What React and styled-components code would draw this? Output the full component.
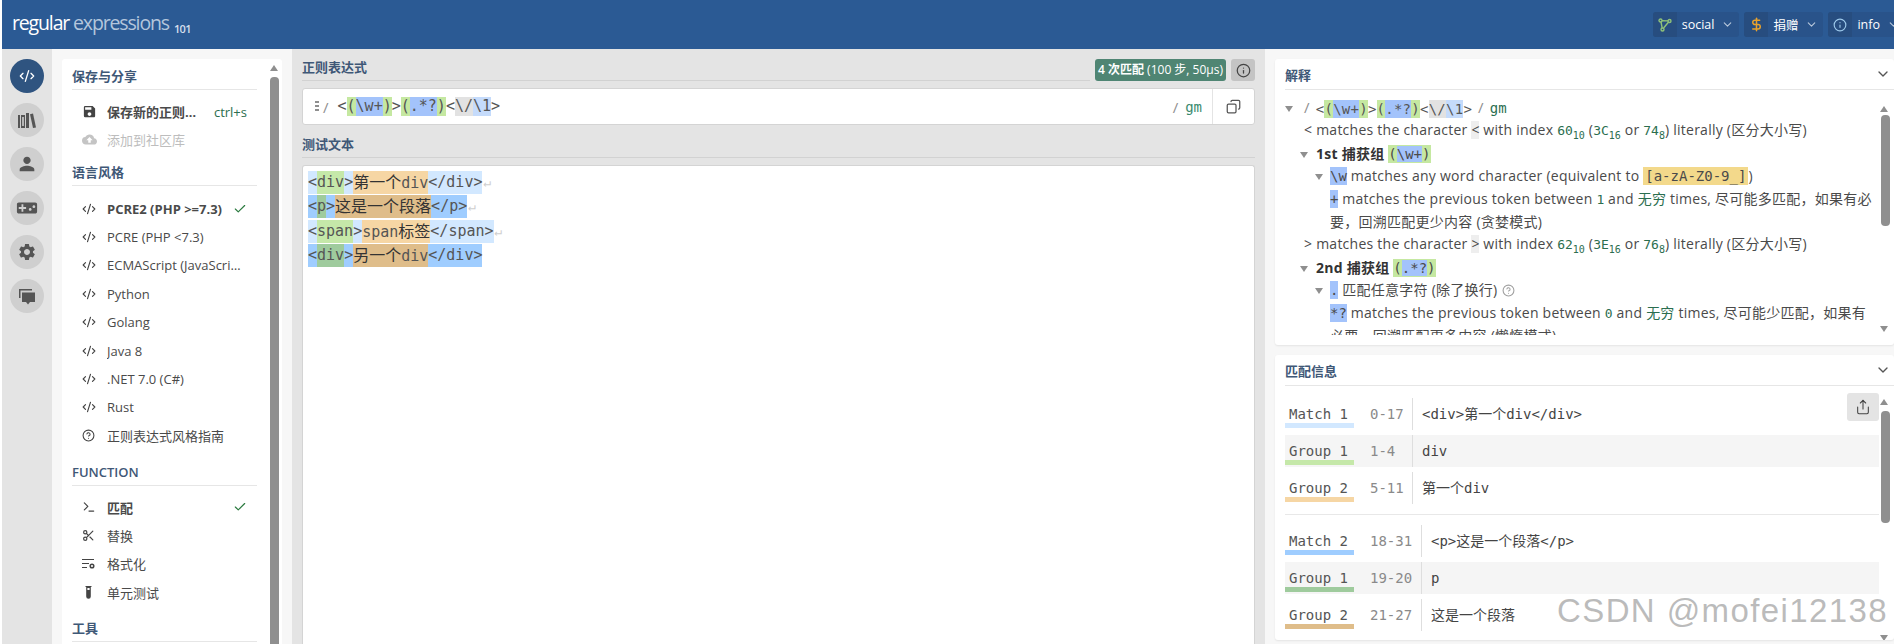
import styled, { createGlobalStyle } from 'styled-components'
import { Check, ChevronDown, CircleHelp, CodeXml, Copy, DollarSign, Info, Scissors, Share, Terminal } from 'lucide-react'
import { MdSave, MdCloudUpload, MdPerson, MdVideogameAsset, MdSettings } from 'react-icons/md'

const UI_FONT = `"Open Sans", "Noto Sans", "Noto Sans CJK SC", sans-serif`
const MONO_FONT = `"DejaVu Sans Mono", "Noto Sans CJK SC", monospace`

const GlobalStyle = createGlobalStyle`
  html, body {
    margin: 0;
    height: 100%;
    overflow: hidden;
    background: #ffffff;
  }
  #root {
    height: 100%;
  }
`

const Page = styled.div`
  height: 644px;
  padding-left: 2px;
  display: flex;
  flex-direction: column;
  font-family: ${UI_FONT};
  font-size: 13px;
  color: #4a4a4a;
  overflow: hidden;
  position: relative;
`

const Header = styled.header`
  flex: 0 0 49px;
  background: #2b5a94;
  display: flex;
  align-items: center;
  padding: 0 0 0 10px;
`

const Logo = styled.div`
  font-size: 19.5px;
  letter-spacing: -1.15px;
  color: #ffffff;
  white-space: nowrap;
  margin-top: -5px;
`

const LogoLight = styled.span`
  color: #b4c6dc;
`

const LogoSmall = styled.span`
  font-size: 11px;
  font-weight: 600;
  letter-spacing: -0.6px;
  color: #d5dfec;
  margin-left: 5px;
  vertical-align: -3px;
`

const HeaderButtons = styled.div`
  margin-left: auto;
  margin-right: -11px;
  display: flex;
  gap: 5px;
`

const HeaderButton = styled.div`
  height: 25px;
  display: flex;
  align-items: center;
  background: #29538a;
  border-radius: 3px;
  color: #ffffff;
  font-size: 12.5px;
  overflow: hidden;
`

const HeaderIcon = styled.span`
  width: 24px;
  height: 25px;
  background: #274d7f;
  display: flex;
  align-items: center;
  justify-content: center;
  color: ${p => p.$color};
`

const HeaderLabel = styled.span`
  margin: 0 5px;
`

const HeaderChevron = styled.span`
  display: flex;
  color: #b8c8dc;
  margin-right: 5px;
  margin-left: 2px;
`

const Body = styled.div`
  flex: 1;
  display: flex;
  min-height: 0;
`

const Rail = styled.nav`
  flex: 0 0 50px;
  background: #e4e4e4;
  padding-top: 10px;
  display: flex;
  flex-direction: column;
  align-items: center;
  gap: 10px;
`

const RailButton = styled.div`
  width: 34px;
  height: 34px;
  border-radius: 50%;
  display: flex;
  align-items: center;
  justify-content: center;
  background: ${p => (p.$active ? '#2f5480' : '#cfcfcf')};
  color: ${p => (p.$active ? '#ffffff' : '#555555')};
`

const SideWrap = styled.aside`
  flex: 0 0 240px;
  background: #f7f7f7;
  padding: 10px 10px 0;
  box-sizing: border-box;
`

const SideCard = styled.div`
  background: #ffffff;
  height: 100%;
  padding: 4px 25px 0 10px;
  position: relative;
  border-radius: 3px 3px 0 0;
  overflow: hidden;
`

const SideHeading = styled.div`
  height: 27px;
  line-height: 26px;
  box-sizing: border-box;
  border-bottom: 1px solid #e6e6e6;
  margin-top: ${p => p.$top || 0}px;
  font-weight: 600;
  font-size: 13px;
  color: #3f5877;
`

const SideList = styled.div`
  padding-top: ${p => p.$pad || 8}px;
`

const SideRow = styled.div`
  height: ${p => p.$height || 28.4}px;
  display: flex;
  align-items: center;
  white-space: nowrap;
  color: ${p => (p.$disabled ? '#bdbdbd' : '#4a4a4a')};
  font-weight: ${p => (p.$active ? 700 : 400)};
`

const SideIcon = styled.span`
  width: 35px;
  padding-left: 10px;
  box-sizing: border-box;
  flex: none;
  display: flex;
  color: ${p => (p.$disabled ? '#c4c4c4' : '#444444')};
`

const SideText = styled.span`
  flex: 1;
  overflow: hidden;
  text-overflow: ellipsis;
  ${p => p.$limit && `max-width: ${p.$limit}px;`}
`

const Shortcut = styled.span`
  color: #2b6e4f;
  font-weight: 400;
  margin-left: auto;
  margin-right: 10px;
`

const RowCheck = styled.span`
  display: flex;
  color: #2b7a3f;
  margin-right: 10px;
  flex: none;
`

const ScrollArrow = styled.span`
  position: absolute;
  right: ${p => p.$right}px;
  top: ${p => p.$top}px;
  width: 0;
  height: 0;
  border-left: 4px solid transparent;
  border-right: 4px solid transparent;
  ${p => (p.$down ? 'border-top: 6px solid #8f8f8f;' : 'border-bottom: 6px solid #8f8f8f;')}
`

const ScrollThumb = styled.span`
  position: absolute;
  right: ${p => p.$right}px;
  top: ${p => p.$top}px;
  width: 9px;
  height: ${p => p.$height}px;
  background: #8f8f8f;
  border-radius: 4px;
`

const Main = styled.main`
  flex: 0 0 973px;
  background: #e4e4e4;
  padding: 10px 10px 0;
  box-sizing: border-box;
  display: flex;
  flex-direction: column;
`

const MainHeadingRow = styled.div`
  display: flex;
  align-items: flex-start;
  gap: 8px;
  margin-top: ${p => p.$top || 0}px;
`

const MainHeading = styled.div`
  flex: 1;
  height: 21px;
  line-height: 16px;
  border-bottom: 1px solid #d2d2d2;
  font-weight: 600;
  color: #3f5877;
`

const MatchBadge = styled.div`
  width: 131px;
  height: 22px;
  border-radius: 3px;
  background: #4f8573;
  color: #ffffff;
  font-size: 12px;
  line-height: 22px;
  text-align: center;
  white-space: nowrap;
  margin-left: -3px;
  margin-right: -3px;
`

const BadgeStrong = styled.b`
  font-weight: 600;
`

const InfoButton = styled.div`
  width: 24px;
  height: 22px;
  border-radius: 3px;
  background: #c4c4c4;
  color: #444444;
  display: flex;
  align-items: center;
  justify-content: center;
`

const RegexBox = styled.div`
  height: 37px;
  margin-top: 7px;
  background: #ffffff;
  border: 1px solid #d4d4d4;
  border-radius: 3px;
  box-sizing: border-box;
  display: flex;
  align-items: center;
  padding-left: 12px;
`

const DragDots = styled.span`
  width: 4px;
  height: 11px;
  margin-right: 4px;
  background: repeating-linear-gradient(#8f8f8f 0 2px, transparent 2px 4px);
`

const Delim = styled.span`
  font-family: ${UI_FONT};
  font-size: 15px;
  color: #8f8f8f;
  margin-left: ${p => p.$before || 0}px;
  margin-right: ${p => p.$gap || 0}px;
`

const Mono = styled.span`
  font-family: ${MONO_FONT};
  font-size: ${p => p.$size || 15}px;
  line-height: ${p => p.$line || 19}px;
  color: #555555;
  display: inline-flex;
  white-space: pre;
  vertical-align: middle;
`

const Hl = styled.span`
  background: ${p => p.$bg};
`

const Flags = styled.span`
  font-family: ${MONO_FONT};
  color: #3a8a6e;
  font-size: 14px;
  margin-left: 7px;
`

const RegexEnd = styled.div`
  margin-left: auto;
  display: flex;
  align-items: center;
  height: 100%;
`

const CopyButton = styled.div`
  width: 41px;
  height: 100%;
  margin-left: 10px;
  border-left: 1px solid #e4e4e4;
  display: flex;
  align-items: center;
  justify-content: center;
  color: #555555;
`

const CopyIcon = styled(Copy)`
  transform: scaleX(-1);
`

const TestBox = styled.div`
  flex: 1;
  margin-top: 7px;
  background: #ffffff;
  border: 1px solid #d4d4d4;
  border-bottom: none;
  border-radius: 3px 3px 0 0;
  padding: 5px 5px 0;
`

const TestLine = styled.div`
  height: 24.3px;
  display: flex;
  align-items: flex-start;
  font-family: ${MONO_FONT};
  font-size: 15px;
  color: #555555;
  white-space: pre;
`

const TestHl = styled.span`
  height: 23px;
  line-height: 23px;
  background: ${p => p.$bg};
`

const Cjk = styled.span`
  font-size: 16px;
  color: #333333;
`

const NewLine = styled.span`
  height: 23px;
  line-height: 23px;
  font-size: 13px;
  color: #cfcfcf;
  margin-left: 1px;
`

const RightWrap = styled.section`
  flex: 1;
  min-width: 0;
  background: #f7f7f7;
  padding: 10px 0 0 10px;
  display: flex;
  flex-direction: column;
  gap: 10px;
`

const Card = styled.div`
  height: ${p => p.$height}px;
  background: #ffffff;
  border-radius: 3px;
  box-shadow: 0 1px 2px rgba(0, 0, 0, 0.08);
  padding: 0 0 0 10px;
  position: relative;
  overflow: hidden;
  box-sizing: border-box;
`

const CardHeader = styled.div`
  height: 31px;
  box-sizing: border-box;
  border-bottom: 1px solid #e6e6e6;
  display: flex;
  align-items: center;
  justify-content: space-between;
  padding-right: 3px;
  font-size: 13px;
  font-weight: 600;
  color: #3f5877;
`

const CardChevron = styled.span`
  display: flex;
  color: #555555;
`

const TreeBody = styled.div`
  height: 239px;
  width: 591px;
  margin-top: 6px;
  overflow: hidden;
  font-size: 14px;
  letter-spacing: 0.25px;
  color: #4a4a4a;
`

const TreeRow = styled.div`
  line-height: 22.4px;
  padding-left: ${p => p.$indent}px;
  font-weight: ${p => (p.$bold ? 700 : 400)};
  color: ${p => (p.$bold ? '#333333' : 'inherit')};
`

const Triangle = styled.span`
  display: inline-block;
  width: 0;
  height: 0;
  border-left: 4px solid transparent;
  border-right: 4px solid transparent;
  border-top: 6px solid #8f8f8f;
  margin-right: ${p => p.$gap}px;
  vertical-align: 1px;
`

const Chip = styled.span`
  background: ${p => p.$bg};
  font-family: ${p => (p.$mono ? MONO_FONT : 'inherit')};
  font-weight: 400;
  letter-spacing: 0;
  padding: 0 ${p => p.$pad || 0}px;
  display: inline-block;
  line-height: 18px;
  vertical-align: top;
  margin-top: 2px;
  color: #4a4a4a;
`

const Num = styled.span`
  color: #2b6e4f;
  font-family: ${MONO_FONT};
  letter-spacing: 0;
  font-size: ${p => p.$size || 13}px;
`

const Sub = styled.sub`
  font-size: 10px;
  line-height: 0;
`

const Infinite = styled.span`
  color: #2b6e4f;
`

const HelpIcon = styled.span`
  display: inline-flex;
  color: #a0a0a0;
  margin-left: 5px;
  vertical-align: -2px;
`

const MatchBody = styled.div`
  padding-top: 12px;
  padding-right: 15px;
`

const MatchGroup = styled.div`
  display: flex;
  flex-direction: column;
  gap: 5px;
  padding-bottom: ${p => (p.$last ? 0 : 10)}px;
  margin-bottom: ${p => (p.$last ? 0 : 10)}px;
  border-bottom: ${p => (p.$last ? 'none' : '1px solid #e8e8e8')};
`

const MatchRow = styled.div`
  height: 32px;
  display: flex;
  background: ${p => (p.$shade ? '#f5f5f5' : 'transparent')};
  font-family: ${MONO_FONT};
  font-size: 14px;
`

const MatchLabel = styled.div`
  width: 69px;
  height: 30px;
  box-sizing: border-box;
  padding: 7px 0 0 4px;
  line-height: 18px;
  border-bottom: 5px solid ${p => p.$color};
  color: #555555;
  white-space: pre;
`

const MatchRange = styled.div`
  width: ${p => p.$width}px;
  margin-left: 16px;
  line-height: 32px;
  color: #8a8a8a;
`

const MatchValue = styled.div`
  border-left: 1px solid #dedede;
  padding-left: 9px;
  line-height: 32px;
  color: #444444;
`

const ShareButton = styled.div`
  position: absolute;
  right: 15px;
  top: 38px;
  width: 32px;
  height: 28px;
  background: #e4e4e4;
  border-radius: 3px;
  display: flex;
  align-items: center;
  justify-content: center;
  color: #444444;
`

const Watermark = styled.div`
  position: absolute;
  left: 1557px;
  top: 592px;
  font-family: "Liberation Sans", sans-serif;
  font-size: 33px;
  letter-spacing: 1.4px;
  line-height: 38px;
  color: rgba(165, 165, 165, 0.75);
  text-shadow: 0 0 2px #ffffff, 1px 1px 2px rgba(255, 255, 255, 0.9);
  white-space: nowrap;
  pointer-events: none;
`

function BooksIcon() {
  return (
    <svg width="18" height="17" viewBox="0 0 18 17" fill="currentColor">
      <rect x="0" y="3" width="2" height="13" />
      <path d="M3 3h4v13H3z M4.2 5v9h1.6V5z" fillRule="evenodd" />
      <rect x="8" y="1" width="3" height="15" />
      <path d="M12 2.2l3-.8 3 14-3 .6z" />
    </svg>
  )
}

function ChatIcon() {
  return (
    <svg width="18" height="17" viewBox="0 0 18 17" fill="currentColor">
      <path d="M1 1h13v1.5H2.5V10H1z" />
      <path d="M4 4.5h13V14h-5l-2 2.5L8 14H4z" />
    </svg>
  )
}

function SocialIcon() {
  return (
    <svg width="14" height="14" viewBox="0 0 14 14" fill="none" stroke="#8fc27a" strokeWidth="1.4">
      <circle cx="2.5" cy="2.5" r="1.5" />
      <circle cx="11.5" cy="3" r="1.5" />
      <circle cx="4.5" cy="11.5" r="1.5" />
      <path d="M4 2.7l6 .2M3 4l1.2 6M10.4 4.2L5.6 10" />
    </svg>
  )
}

function FormatIcon() {
  return (
    <svg width="13" height="13" viewBox="0 0 13 13" fill="none" stroke="currentColor" strokeWidth="1.1">
      <path d="M0 2.5h12M0 6.5h7M0 10.5h5" />
      <circle cx="10" cy="9" r="1.8" strokeWidth="1.5" />
    </svg>
  )
}

function TubeIcon() {
  return (
    <svg width="13" height="13" viewBox="0 0 13 13" fill="currentColor">
      <path d="M3.5 0h6v1h-.7v9.5a2.3 2.3 0 0 1-4.6 0V1h-.7z M5.4 2v2h2.2V2z" fillRule="evenodd" />
    </svg>
  )
}

const flavors = ['PCRE (PHP <7.3)', 'ECMAScript (JavaScript)', 'Python', 'Golang', 'Java 8', '.NET 7.0 (C#)', 'Rust']

function RegexTokens({ size, line }) {
  return (
    <Mono $size={size} $line={line}>
      {'<'}
      <Hl $bg="#c5e8a1">(</Hl>
      <Hl $bg="#a3c3fb">\w+</Hl>
      <Hl $bg="#c5e8a1">)</Hl>
      {'>'}
      <Hl $bg="#c5e8a1">(</Hl>
      <Hl $bg="#a3c3fb">.*?</Hl>
      <Hl $bg="#c5e8a1">)</Hl>
      {'<'}
      <Hl $bg="#e2e2e2">\/</Hl>
      <Hl $bg="#c5dbfb">\1</Hl>
      {'>'}
    </Mono>
  )
}

function TestRow({ open, name, text, close, alt, marker = true }) {
  const full = alt ? '#9fcdff' : '#d2e8ff'
  const group1 = alt ? '#9fcb9d' : '#c5e8a9'
  const group2 = alt ? '#dfbd8a' : '#f6d6a4'
  return (
    <TestLine>
      <TestHl $bg={full}>{open}</TestHl>
      <TestHl $bg={group1}>{name}</TestHl>
      <TestHl $bg={full}>{'>'}</TestHl>
      <TestHl $bg={group2}>{text}</TestHl>
      <TestHl $bg={full}>{close}</TestHl>
      {marker && <NewLine>↵</NewLine>}
    </TestLine>
  )
}

function MatchTable({ rows, rangeWidth, last }) {
  return (
    <MatchGroup $last={last}>
      {rows.map((row, i) => (
        <MatchRow key={row.label} $shade={i === 1}>
          <MatchLabel $color={row.color}>{row.label}</MatchLabel>
          <MatchRange $width={rangeWidth}>{row.range}</MatchRange>
          <MatchValue>{row.value}</MatchValue>
        </MatchRow>
      ))}
    </MatchGroup>
  )
}

export default function App() {
  return (
    <Page>
      <GlobalStyle />
      <Header>
        <Logo>
          regular <LogoLight>expressions</LogoLight>
          <LogoSmall>101</LogoSmall>
        </Logo>
        <HeaderButtons>
          <HeaderButton>
            <HeaderIcon><SocialIcon /></HeaderIcon>
            <HeaderLabel>social</HeaderLabel>
            <HeaderChevron><ChevronDown size={13} /></HeaderChevron>
          </HeaderButton>
          <HeaderButton>
            <HeaderIcon $color="#e9a22c"><DollarSign size={15} strokeWidth={2.4} /></HeaderIcon>
            <HeaderLabel>捐赠</HeaderLabel>
            <HeaderChevron><ChevronDown size={13} /></HeaderChevron>
          </HeaderButton>
          <HeaderButton>
            <HeaderIcon $color="#9cc8ea"><Info size={14} /></HeaderIcon>
            <HeaderLabel>info</HeaderLabel>
            <HeaderChevron><ChevronDown size={13} /></HeaderChevron>
          </HeaderButton>
        </HeaderButtons>
      </Header>
      <Body>
        <Rail>
          <RailButton $active><CodeXml size={16} /></RailButton>
          <RailButton><BooksIcon /></RailButton>
          <RailButton><MdPerson size={22} /></RailButton>
          <RailButton><MdVideogameAsset size={22} /></RailButton>
          <RailButton><MdSettings size={20} /></RailButton>
          <RailButton><ChatIcon /></RailButton>
        </Rail>
        <SideWrap>
          <SideCard>
            <SideHeading>保存与分享</SideHeading>
            <SideList>
              <SideRow $active $height={27}>
                <SideIcon><MdSave size={15} /></SideIcon>
                <SideText $limit={92}>保存新的正则表达式</SideText>
                <Shortcut>ctrl+s</Shortcut>
              </SideRow>
              <SideRow $disabled>
                <SideIcon $disabled><MdCloudUpload size={15} /></SideIcon>
                <SideText>添加到社区库</SideText>
              </SideRow>
            </SideList>
            <SideHeading $top={6}>语言风格</SideHeading>
            <SideList>
              <SideRow $active>
                <SideIcon><CodeXml size={14} /></SideIcon>
                <SideText>PCRE2 (PHP &gt;=7.3)</SideText>
                <RowCheck><Check size={14} /></RowCheck>
              </SideRow>
              {flavors.map(name => (
                <SideRow key={name}>
                  <SideIcon><CodeXml size={14} /></SideIcon>
                  <SideText $limit={135}>{name}</SideText>
                </SideRow>
              ))}
              <SideRow>
                <SideIcon><CircleHelp size={13} /></SideIcon>
                <SideText>正则表达式风格指南</SideText>
              </SideRow>
            </SideList>
            <SideHeading $top={9}>FUNCTION</SideHeading>
            <SideList $pad={7}>
              <SideRow $active>
                <SideIcon><Terminal size={14} /></SideIcon>
                <SideText>匹配</SideText>
                <RowCheck><Check size={14} /></RowCheck>
              </SideRow>
              <SideRow>
                <SideIcon><Scissors size={13} strokeWidth={2.2} /></SideIcon>
                <SideText>替换</SideText>
              </SideRow>
              <SideRow>
                <SideIcon><FormatIcon /></SideIcon>
                <SideText>格式化</SideText>
              </SideRow>
              <SideRow>
                <SideIcon><TubeIcon /></SideIcon>
                <SideText>单元测试</SideText>
              </SideRow>
            </SideList>
            <SideHeading $top={9}>工具</SideHeading>
            <ScrollArrow $right={4} $top={6} />
            <ScrollThumb $right={3} $top={18} $height={600} />
          </SideCard>
        </SideWrap>
        <Main>
          <MainHeadingRow>
            <MainHeading>正则表达式</MainHeading>
            <MatchBadge><BadgeStrong>4 次匹配</BadgeStrong> (100 步, 50µs)</MatchBadge>
            <InfoButton><Info size={15} /></InfoButton>
          </MainHeadingRow>
          <RegexBox>
            <DragDots />
            <Delim $gap={9}>/</Delim>
            <RegexTokens />
            <RegexEnd>
              <Delim>/</Delim>
              <Flags>gm</Flags>
              <CopyButton><CopyIcon size={15} /></CopyButton>
            </RegexEnd>
          </RegexBox>
          <MainHeadingRow $top={11}>
            <MainHeading>测试文本</MainHeading>
          </MainHeadingRow>
          <TestBox>
            <TestRow open="<" name="div" text={<><Cjk>第一个</Cjk>div</>} close="</div>" />
            <TestRow alt open="<" name="p" text={<Cjk>这是一个段落</Cjk>} close="</p>" />
            <TestRow open="<" name="span" text={<>span<Cjk>标签</Cjk></>} close="</span>" />
            <TestRow alt open="<" name="div" text={<><Cjk>另一个</Cjk>div</>} close="</div>" marker={false} />
          </TestBox>
        </Main>
        <RightWrap>
          <Card $height={286}>
            <CardHeader>解释<CardChevron><ChevronDown size={16} /></CardChevron></CardHeader>
            <TreeBody>
              <TreeRow $indent={0}>
                <Triangle $gap={11} />
                <Delim $gap={6}>/</Delim>
                <RegexTokens size={14} line={18} />
                <Delim $before={6} $gap={6}>/</Delim>
                <Num $size={14}>gm</Num>
              </TreeRow>
              <TreeRow $indent={19}>
                &lt; matches the character <Chip $bg="#eeeeee">&lt;</Chip> with index <Num>60<Sub>10</Sub></Num> (<Num>3C<Sub>16</Sub></Num> or <Num>74<Sub>8</Sub></Num>) literally (区分大小写)
              </TreeRow>
              <TreeRow $indent={15} $bold>
                <Triangle $gap={8} />1st 捕获组 <Chip $bg="#c5e8a1" $mono>(<Hl $bg="#a3c3fb">\w+</Hl>)</Chip>
              </TreeRow>
              <TreeRow $indent={30}>
                <Triangle $gap={7} /><Chip $bg="#a3c3fb" $mono>\w</Chip> matches any word character (equivalent to <Chip $bg="#f3d98b" $mono $pad={2}>[a-zA-Z0-9_]</Chip>)
              </TreeRow>
              <TreeRow $indent={45}>
                <Chip $bg="#a3c3fb" $mono>+</Chip> matches the previous token between <Num>1</Num> and <Infinite>无穷</Infinite> times, 尽可能多匹配&#xFF0C;如果有必要&#xFF0C;回溯匹配更少内容 (贪婪模式)
              </TreeRow>
              <TreeRow $indent={19}>
                &gt; matches the character <Chip $bg="#eeeeee">&gt;</Chip> with index <Num>62<Sub>10</Sub></Num> (<Num>3E<Sub>16</Sub></Num> or <Num>76<Sub>8</Sub></Num>) literally (区分大小写)
              </TreeRow>
              <TreeRow $indent={15} $bold>
                <Triangle $gap={8} />2nd 捕获组 <Chip $bg="#c5e8a1" $mono>(<Hl $bg="#a3c3fb">.*?</Hl>)</Chip>
              </TreeRow>
              <TreeRow $indent={30}>
                <Triangle $gap={7} /><Chip $bg="#a3c3fb" $mono>.</Chip> 匹配任意字符 (除了换行)<HelpIcon><CircleHelp size={13} /></HelpIcon>
              </TreeRow>
              <TreeRow $indent={45}>
                <Chip $bg="#a3c3fb" $mono>*?</Chip> matches the previous token between <Num>0</Num> and <Infinite>无穷</Infinite> times, 尽可能少匹配&#xFF0C;如果有必要&#xFF0C;回溯匹配更多内容 (懒惰模式)
              </TreeRow>
            </TreeBody>
            <ScrollArrow $right={6} $top={47} />
            <ScrollThumb $right={4} $top={56} $height={111} />
            <ScrollArrow $right={6} $top={267} $down />
          </Card>
          <Card $height={285}>
            <CardHeader>匹配信息<CardChevron><ChevronDown size={16} /></CardChevron></CardHeader>
            <MatchBody>
              <MatchTable
                rangeWidth={42}
                rows={[
                  { label: 'Match 1', color: '#d2e8ff', range: '0-17', value: '<div>第一个div</div>' },
                  { label: 'Group 1', color: '#c5e8a9', range: '1-4', value: 'div' },
                  { label: 'Group 2', color: '#f6d6a4', range: '5-11', value: '第一个div' },
                ]}
              />
              <MatchTable
                last
                rangeWidth={51}
                rows={[
                  { label: 'Match 2', color: '#9fcdff', range: '18-31', value: '<p>这是一个段落</p>' },
                  { label: 'Group 1', color: '#9fcb9d', range: '19-20', value: 'p' },
                  { label: 'Group 2', color: '#dfbd8a', range: '21-27', value: '这是一个段落' },
                ]}
              />
            </MatchBody>
            <ShareButton><Share size={16} strokeWidth={1.6} /></ShareButton>
            <ScrollArrow $right={6} $top={44} />
            <ScrollThumb $right={4} $top={56} $height={112} />
            <ScrollArrow $right={6} $top={280} $down />
          </Card>
        </RightWrap>
      </Body>
      <Watermark>CSDN @mofei12138</Watermark>
    </Page>
  )
}
